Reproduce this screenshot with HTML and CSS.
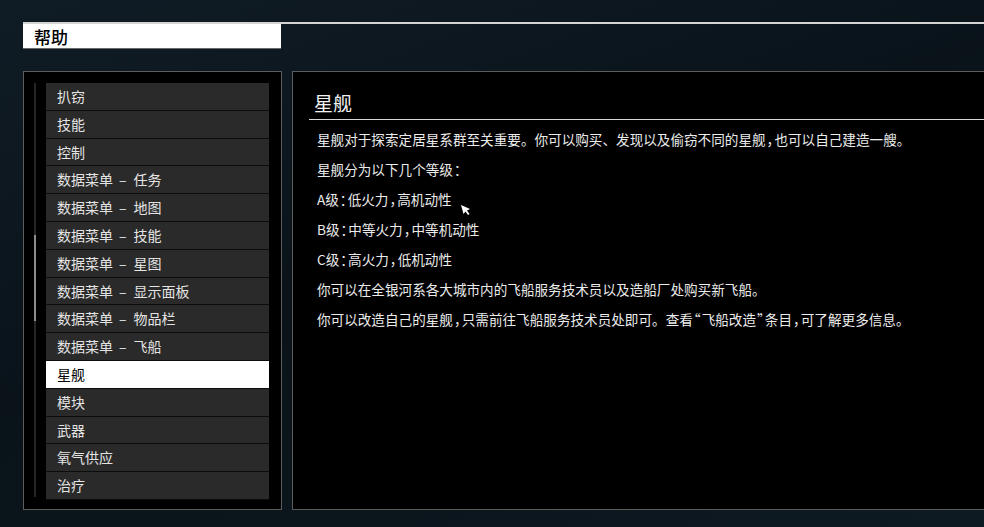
FILE: index.html
```html
<html>
<head>
    <meta charset="utf-8">
    <title>帮助</title>
    <link rel="stylesheet" href="styles.css">
</head>
<body>
    <div class="page">
        <div class="topbar">
            <div class="topbar-title">帮助</div>
        </div>

        <div class="main">
            <div class="sidebar">
                <div class="track"><div class="thumb"></div></div>
                <ul class="topics">
                    <li>扒窃</li>
                    <li>技能</li>
                    <li>控制</li>
                    <li>数据菜单<span class="dash">–</span>任务</li>
                    <li>数据菜单<span class="dash">–</span>地图</li>
                    <li>数据菜单<span class="dash">–</span>技能</li>
                    <li>数据菜单<span class="dash">–</span>星图</li>
                    <li>数据菜单<span class="dash">–</span>显示面板</li>
                    <li>数据菜单<span class="dash">–</span>物品栏</li>
                    <li>数据菜单<span class="dash">–</span>飞船</li>
                    <li class="active">星舰</li>
                    <li>模块</li>
                    <li>武器</li>
                    <li>氧气供应</li>
                    <li>治疗</li>
                </ul>
            </div>

            <div class="article">
                <h1>星舰</h1>
                <p>星舰对于探索定居星系群至关重要。你可以购买、发现以及偷窃不同的星舰<span class="np">，</span>也可以自己建造一艘。</p>
                <p>星舰分为以下几个等级<span class="np">：</span></p>
                <p>A级<span class="np">：</span>低火力<span class="np">，</span>高机动性</p>
                <p>B级<span class="np">：</span>中等火力<span class="np">，</span>中等机动性</p>
                <p>C级<span class="np">：</span>高火力<span class="np">，</span>低机动性</p>
                <p>你可以在全银河系各大城市内的飞船服务技术员以及造船厂处购买新飞船。</p>
                <p>你可以改造自己的星舰<span class="np">，</span>只需前往飞船服务技术员处即可。查看<span class="np">“</span>飞船改造<span class="np">”</span>条目<span class="np">，</span>可了解更多信息。</p>
            </div>
        </div>
    </div>

    <!-- mouse pointer -->
    <svg class="pointer" width="12" height="12" viewBox="0 0 12 12">
        <polygon points="1,1 10,5 7,6.5 9.5,10 8,11 5.5,7.5 3.5,10" fill="#fff"/>
    </svg>
</body>
</html>
```

FILE: styles.css
```css
body { margin: 0; height: 527px; overflow: hidden; font-family: "Noto Sans CJK SC", "Noto Sans", sans-serif;
       background: linear-gradient(160deg, #101c25 0%, #0a131a 45%, #0b151c 75%, #0e1a22 100%); color: #e6e6e6; }
.page { padding: 22px 0 0 23px; }

.topbar { display: flex; height: 25px; border-top: 2px solid #d4d4d4; }
.topbar-title { width: 247px; padding-left: 11px; background: #fff; color: #000; border-bottom: 1px solid #6a6a6a;
                font-size: 17px; font-weight: 500; line-height: 25px; }

.main { display: flex; gap: 10px; margin-top: 22px; height: 439px; }

.sidebar { width: 235px; flex: none; display: flex; padding: 11px 12px 0 10px; border: 1px solid #5c5c5c; background: #000; }
.track { width: 2px; height: 414px; background: #262626; }
.thumb { margin-top: 152px; height: 86px; background: #8c8c8c; }

.topics { list-style: none; margin: 0 0 0 10px; padding: 0; flex: 1; }
.topics li { height: 26.8px; line-height: 26.8px; padding-left: 11px; border-bottom: 1px solid #0c0c0c;
             background: #2a2a2a; font-size: 14px; color: #e4e4e4; white-space: nowrap; }
.topics li.active { background: #fff; color: #000; }
.dash { margin: 0 7px 0 6px; }

.article { flex: 1; padding: 17px 0 0 16px; border: 1px solid #5c5c5c; border-right: none; background: #000; }
.article h1 { margin: 0 0 9px; padding: 0 0 3px 5px; border-bottom: 1px solid #d8d8d8;
              font-size: 19px; font-weight: normal; line-height: 27px; color: #f0f0f0; }
.article p { margin: 0 0 10px; padding-left: 8px; font-size: 13.6px; line-height: 20px; color: #ececec; white-space: nowrap; }
.np { font-feature-settings: "halt"; margin: 0 1px; }

.pointer { position: absolute; left: 460px; top: 204px; }
```
